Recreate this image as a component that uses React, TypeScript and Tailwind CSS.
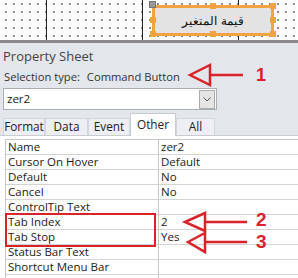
const rows: [string, string][] = [
  ['Name', 'zer2'],
  ['Cursor On Hover', 'Default'],
  ['Default', 'No'],
  ['Cancel', 'No'],
  ['ControlTip Text', ''],
  ['Tab Index', '2'],
  ['Tab Stop', 'Yes'],
  ['Status Bar Text', ''],
  ['Shortcut Menu Bar', ''],
  ['', ''],
];

const tabs = ['Format', 'Data', 'Event', 'Other', 'All'];
const tabWidths = ['w-[42px]', 'w-[43px]', 'w-[42px]', 'w-[46px]', 'w-[39px]'];

function Handle({ className }: { className: string }) {
  return <div className={`absolute h-[6px] w-[6px] bg-[#f0a23e] ${className}`} />;
}

export default function App() {
  return (
    <div className="relative h-[278px] w-[298px] overflow-hidden bg-[#e3e6eb] font-['Open_Sans',sans-serif] text-[#222]">
      {/* form design area */}
      <div className="relative flex h-[40px] bg-white bg-[radial-gradient(circle,#8a8a8a_0.7px,transparent_0.9px)] bg-[length:8px_8px] bg-[position:2px_0px]">
        <div className="w-[47px] border-r border-[#222]" />
        <div className="w-[96px] border-r border-[#222]" />
        <div className="w-[96px] border-r border-[#222]" />
        {/* selected button */}
        <div className="absolute left-[152px] top-[5px] flex h-[31px] w-[122px] items-center justify-center border-[3px] border-[#f2a445] bg-[#e3e3e3] font-['Noto_Sans',sans-serif] text-[12px] text-[#111]">
          قيمة المتغير
        </div>
        <div className="absolute left-[149px] top-[1px] h-[7px] w-[7px] border border-[#777] bg-[#9a9a9a]" />
        <Handle className="left-[210px] top-[3px]" />
        <Handle className="left-[270px] top-[3px]" />
        <Handle className="left-[150px] top-[17px]" />
        <Handle className="left-[270px] top-[17px]" />
        <Handle className="left-[150px] top-[31px]" />
        <Handle className="left-[210px] top-[31px]" />
        <Handle className="left-[270px] top-[31px]" />
      </div>
      <div className="h-[3px] bg-[#8b8b8b]" />

      {/* property sheet */}
      <div className="flex flex-col">
        <div className="h-[24px] pl-[3px] pt-[5px] text-[13px] leading-[17px] text-[#444]">Property Sheet</div>
        <div className="flex h-[20px] items-center gap-[7px] pl-[4px] text-[11.2px] text-[#333]">
          <span>Selection type:</span>
          <span>Command Button</span>
        </div>
        <div className="mt-[1px] ml-[3px] flex h-[22px] w-[214px] items-center border border-[#abadb3] bg-white">
          <span className="flex-1 pl-[3px] text-[11.5px]">zer2</span>
          <div className="mr-px flex h-[19px] w-[16px] items-center justify-center border border-[#acacac] bg-[#e5e5e5]">
            <svg width="8" height="5" viewBox="0 0 8 5">
              <path d="M0.5 0.5 L4 4 L7.5 0.5" fill="none" stroke="#555" strokeWidth="1" />
            </svg>
          </div>
        </div>
        {/* tabs */}
        <div className="mt-[4px] flex h-[22px] items-end border-b border-[#c9ccd1] pl-[3px]">
          {tabs.map((t, i) =>
            t === 'Other' ? (
              <div
                key={t}
                className={`${tabWidths[i]} -mb-px flex h-[23px] items-center justify-center border border-b-0 border-[#c9ccd1] bg-white text-[11.8px]`}
              >
                {t}
              </div>
            ) : (
              <div
                key={t}
                className={`${tabWidths[i]} flex h-[17px] items-center justify-center border border-b-0 border-[#d3d6db] bg-[#edeff2] text-[11.8px]`}
              >
                {t}
              </div>
            ),
          )}
        </div>
        {/* grid */}
        <div className="bg-white pt-[3px] pl-[5px]">
          <div className="border-l border-t border-[#c6c6c6]">
            {rows.map(([k, v], i) => (
              <div key={i} className="flex h-[15px] border-b border-[#d4d4d4] text-[11.5px] leading-[14px]">
                <div className="w-[153px] border-r border-[#c6c6c6] pl-[2px]">{k}</div>
                <div className="flex-1 pl-[2px]">{v}</div>
              </div>
            ))}
          </div>
        </div>
      </div>

      {/* annotations */}
      <div className="absolute left-[5px] top-[213px] h-[34px] w-[151px] border-2 border-[#d8232a]" />
      <svg className="absolute left-0 top-0" width="298" height="278" viewBox="0 0 298 278">
        <g fill="none" stroke="#d8232a" strokeWidth="2.5" strokeLinejoin="miter">
          <path d="M190 75 L210 65 L210 85 Z" />
          <path d="M210 75 H243" />
          <path d="M185 222 L205 213 L205 231 Z" />
          <path d="M205 222 H247" />
          <path d="M188 242 L205 233 L205 252 Z" />
          <path d="M205 242 H247" />
        </g>
      </svg>
      <div className="absolute left-[256px] top-[64px] font-['Liberation_Sans',sans-serif] text-[18px] font-bold leading-[22px] text-[#d8232a]">1</div>
      <div className="absolute left-[256px] top-[209px] font-['Liberation_Sans',sans-serif] text-[19px] font-bold leading-[22px] text-[#d8232a]">2</div>
      <div className="absolute left-[256px] top-[231px] font-['Liberation_Sans',sans-serif] text-[19px] font-bold leading-[22px] text-[#d8232a]">3</div>
    </div>
  );
}
